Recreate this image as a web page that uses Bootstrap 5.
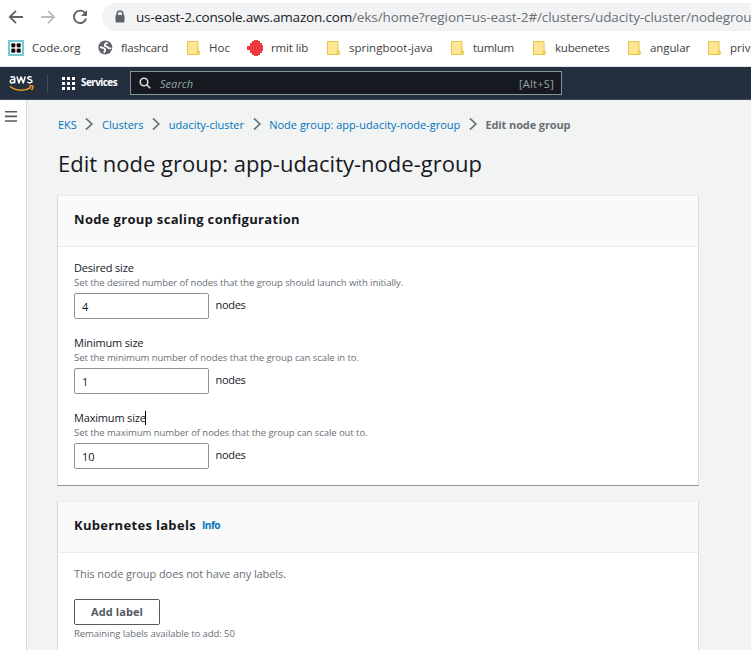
<!DOCTYPE html>
<html lang="en">
<head>
<meta charset="utf-8">
<meta name="viewport" content="width=device-width, initial-scale=1">
<title>Edit node group</title>
<link rel="stylesheet" href="https://cdn.jsdelivr.net/npm/bootstrap@5.3.0/dist/css/bootstrap.min.css">
<style>
html, body { height: 650px; overflow: hidden; }
body { font-family: "Open Sans", "Noto Sans", sans-serif; font-size: 11px; line-height: 15px; color: #16191f; background: #fff; }
svg { display: block; flex: none; }
a { color: #0073bb; text-decoration: none; }

/* browser chrome */
.toolbar { height: 33px; padding-left: 8px; }
.tool-icon { width: 16px; height: 16px; margin-right: 16px; }
.omnibox { height: 28px; margin-left: -2px; margin-right: -20px; padding-left: 12px; border-radius: 14px 0 0 14px; background: #f1f3f4; font-size: 13.5px; line-height: 28px; color: #202124; }
.omnibox svg { margin-right: 10px; }
.omnibox .host { letter-spacing: -.18px; width: 216px; }
.omnibox .path { letter-spacing: -.09px; color: #6b6f73; }
.bookmarks { height: 34px; padding: 0 0 4px 8px; border-bottom: 1px solid #dee1e6; font-size: 11.5px; color: #3c4043; }
.bookmark { flex: none; display: flex; align-items: center; }
.bookmark svg { margin-right: 8px; }
.bookmark:nth-child(1) { width: 90px; }
.bookmark:nth-child(2) { width: 89px; letter-spacing: -.25px; }
.bookmark:nth-child(3) { width: 60px; }
.bookmark:nth-child(4) { width: 80px; letter-spacing: -.13px; }
.bookmark:nth-child(5) { width: 124px; }
.bookmark:nth-child(6) { width: 82px; letter-spacing: -.23px; }
.bookmark:nth-child(7) { width: 95px; letter-spacing: -.19px; }
.bookmark:nth-child(8) { width: 80px; letter-spacing: -.1px; }

/* console header */
.console-bar { height: 33px; background: #232f3e; border-bottom: 1px solid #424d5b; color: #fff; padding-left: 9px; }
.bar-divider { width: 1px; height: 18px; background: #414d5c; margin: 0 14px 0 13px; }
.services { width: 49px; margin-left: 6px; margin-top: -2px; font-size: 10px; font-weight: 700; letter-spacing: -.58px; }
.searchbox { width: 432px; height: 24px; background: #16191f; border: 1px solid #879596; padding: 0 7px 0 8px; color: #95a5a6; }
.searchbox em { font-size: 11px; margin-left: 9px; letter-spacing: .05px; }
.searchbox span { letter-spacing: .26px; }

/* page */
.page { height: 550px; }
.side { width: 27px; border-right: 1px solid #d5dbdb; padding: 11px 0 0 5px; }
.content { background: #f2f3f3; padding: 16px 52px 0 30px; }
.crumbs { height: 16px; padding-left: 1px; }
.crumbs svg { margin: 0 8.6px; }
.crumbs .here { color: #687078; font-weight: 700; letter-spacing: -.113px; }
.page-title { font-size: 22px; line-height: 30px; font-weight: 400; margin: 16px 0 17px 1px; }
.panel { width: 642px; margin-bottom: 15px; background: #fff; border: 1px solid #d5dbdb; border-top-color: #eaeded; border-bottom-color: #879596; }
.panel-head { height: 51px; background: #fafafa; border-bottom: 1px solid #eaeded; padding: 0 16px 5px; }
.panel-head h2 { font-size: 13px; line-height: 18px; font-weight: 700; margin: 0; letter-spacing: .32px; }
.panel-head .info { font-size: 10px; font-weight: 700; margin: 2px 0 0 6px; letter-spacing: -.48px; }
.fields { height: 238px; padding: 13px 16px 0; }
.field { height: 75.2px; }
.field label { display: block; line-height: 15px; letter-spacing: -.18px; }
.hint { font-size: 9.5px; line-height: 15px; color: #687078; letter-spacing: -.065px; white-space: nowrap; }
.num { width: 135px; height: 26px; margin-top: 3px; padding: 1px 7px 0; border: 1px solid #879596; border-radius: 2px; font-size: 11px; line-height: 15px; color: #16191f; }
.unit { margin: 0 0 0 6.5px; letter-spacing: -.3px; }
.caret { display: inline-block; width: 1px; height: 14px; margin-left: -1px; background: #000; vertical-align: -3px; }
.labels-body { padding: 13px 16px 48px; }
.empty-note { margin: 0 0 18px; color: #687078; letter-spacing: -.08px; }
.add-btn { display: block; width: 86px; height: 26px; margin-bottom: 1px; padding: 0; border: 1px solid #545b64; border-radius: 2px; font-size: 11px; line-height: 22px; font-weight: 700; color: #545b64; letter-spacing: .1px; background: #fff; }
</style>
<script src="https://cdn.jsdelivr.net/npm/bootstrap@5.3.0/dist/js/bootstrap.bundle.min.js"></script>
</head>
<body>
<svg width="0" height="0" class="position-absolute">
  <defs>
    <symbol id="folder" viewBox="0 0 14 16"><path d="M.5 1.5H11v9.3h1v3.7H.5z" fill="#ffe694" stroke="#e8c444"/><path d="M10 14.5v-3.2h2v3.2z" fill="#ffe694" stroke="#e8c444"/></symbol>
    <symbol id="chev" viewBox="0 0 8 12"><path d="M1 .4 6.8 6 1 11.6" fill="none" stroke="#687078" stroke-width="1.7"/></symbol>
  </defs>
</svg>

<div class="toolbar d-flex align-items-center overflow-hidden">
  <svg class="tool-icon" viewBox="0 0 16 16" fill="none" stroke="#5f6368" stroke-width="1.8"><path d="M15 8H2M8 1.8 1.8 8 8 14.2"/></svg>
  <svg class="tool-icon" viewBox="0 0 16 16" fill="none" stroke="#babcbe" stroke-width="1.8"><path d="M1 8h13M8 1.8 14.2 8 8 14.2"/></svg>
  <svg class="tool-icon" viewBox="0 0 16 16"><path d="M13.2 4.2A6.2 6.2 0 1 0 14.1 9.6" fill="none" stroke="#5f6368" stroke-width="1.9"/><path d="M15 1v6H9z" fill="#5f6368"/></svg>
  <div class="omnibox d-flex align-items-center flex-grow-1 text-nowrap">
    <svg width="12" height="14" viewBox="0 0 12 14"><path d="M3.2 6V3.8a2.8 2.8 0 0 1 5.6 0V6" fill="none" stroke="#5f6368" stroke-width="1.5"/><rect x="1.5" y="5" width="9" height="7.5" rx="1" fill="#5f6368"/></svg>
    <span class="host">us-east-2.console.aws.amazon.com</span><span class="path">/eks/home?region=us-east-2#/clusters/udacity-cluster/nodegroups</span>
  </div>
</div>

<div class="bookmarks d-flex align-items-center overflow-hidden text-nowrap">
  <div class="bookmark"><svg width="16" height="16"><rect x="1" y="1" width="14" height="14" fill="#fff" stroke="#4fbdc9" stroke-width="1.6"/><g fill="#111"><rect x="3.2" y="3.2" width="4.2" height="4.2" rx="1.3"/><rect x="8.6" y="3.2" width="4.2" height="4.2" rx="1.3"/><rect x="3.2" y="8.6" width="4.2" height="4.2" rx="1.3"/><rect x="8.6" y="8.6" width="4.2" height="4.2" rx="1.3"/></g></svg>Code.org</div>
  <div class="bookmark"><svg width="15" height="15" viewBox="0 0 15 15"><circle cx="7.3" cy="7.5" r="7" fill="#5f6368"/><path d="M9.6 2.6 6.8 4.2l.2 1.9 2.2.6 1.4 1.4 2.6.2M2 7.2l3 .6 2 1.2.2 1.4-1.4 2.4" fill="none" stroke="#fff" stroke-width="1.7"/></svg>flashcard</div>
  <div class="bookmark"><svg width="14" height="16"><use href="#folder"/></svg>Hoc</div>
  <div class="bookmark"><svg width="16" height="16"><path d="M0 6h3V3h2V1h2V0h4v1h2v2h2v2h1v6h-1v2h-2v2h-2v1H7v-1H5v-2H3v-3H0z" fill="#ee3b40"/></svg>rmit lib</div>
  <div class="bookmark"><svg width="14" height="16"><use href="#folder"/></svg>springboot-java</div>
  <div class="bookmark"><svg width="14" height="16"><use href="#folder"/></svg>tumlum</div>
  <div class="bookmark"><svg width="14" height="16"><use href="#folder"/></svg>kubenetes</div>
  <div class="bookmark"><svg width="14" height="16"><use href="#folder"/></svg>angular</div>
  <div class="bookmark"><svg width="14" height="16"><use href="#folder"/></svg>private</div>
</div>

<header class="console-bar d-flex align-items-center">
  <svg width="25" height="19" viewBox="0 0 25 19">
    <g fill="none" stroke="#fff" stroke-width="1.5" stroke-linejoin="round">
      <path d="M1.5 3.4C3 2.3 5.7 2.2 5.7 4.6v4.6M5.7 5.7C3.7 5.2 1.2 5.5 1.2 7.3c0 2.4 3.2 2 4.5.2"/>
      <path d="m8 2.5 1.9 6.4 2.2-6 2.2 6 1.9-6.4"/>
      <path d="M22.7 3.2c-1.6-.9-4-.6-4 .8 0 2 4.3 1 4.3 3.2 0 1.8-2.8 2-4.7 1"/>
    </g>
    <path d="M.8 12.2c6.2 5 15.5 5.2 21.2 1.2M20 12.2c2.5-.7 4.2-.7 4 .4 0 1.2-.6 2.5-1.4 3.5" fill="none" stroke="#f79a20" stroke-width="1.4"/>
  </svg>
  <div class="bar-divider"></div>
  <svg width="13" height="13" viewBox="0 0 13 13" fill="#fff"><path d="M0 0h3v3H0zM5 0h3v3H5zM10 0h3v3h-3zM0 5h3v3H0zM5 5h3v3H5zM10 5h3v3h-3zM0 10h3v3H0zM5 10h3v3H5zM10 10h3v3h-3z"/></svg>
  <span class="services">Services</span>
  <div class="searchbox d-flex align-items-center">
    <svg width="12" height="12" viewBox="0 0 12 12" fill="none" stroke="#d5dbdb" stroke-width="1.6"><circle cx="5" cy="5" r="3.8"/><path d="m7.7 7.7 3.6 3.6"/></svg>
    <em>Search</em>
    <span class="ms-auto">[Alt+S]</span>
  </div>
</header>

<div class="page d-flex">
  <nav class="side flex-shrink-0">
    <svg width="12" height="11" viewBox="0 0 12 11" fill="#545b64"><path d="M0 0h12v1.6H0zM0 4.6h12v1.6H0zM0 9.2h12v1.6H0z"/></svg>
  </nav>
  <main class="content flex-grow-1 overflow-hidden">
    <div class="crumbs d-flex align-items-center text-nowrap">
      <a href="#">EKS</a><svg width="8" height="12"><use href="#chev"/></svg>
      <a href="#">Clusters</a><svg width="8" height="12"><use href="#chev"/></svg>
      <a href="#">udacity-cluster</a><svg width="8" height="12"><use href="#chev"/></svg>
      <a href="#">Node group: app-udacity-node-group</a><svg width="8" height="12"><use href="#chev"/></svg>
      <span class="here">Edit node group</span>
    </div>
    <h1 class="page-title">Edit node group: app-udacity-node-group</h1>

    <section class="panel">
      <div class="panel-head d-flex align-items-center"><h2>Node group scaling configuration</h2></div>
      <div class="fields">
        <div class="field">
          <label for="desired">Desired size</label>
          <div class="hint">Set the desired number of nodes that the group should launch with initially.</div>
          <div class="d-flex align-items-center"><input id="desired" class="num" value="4"><span class="unit">nodes</span></div>
        </div>
        <div class="field">
          <label for="minimum">Minimum size</label>
          <div class="hint">Set the minimum number of nodes that the group can scale in to.</div>
          <div class="d-flex align-items-center"><input id="minimum" class="num" value="1"><span class="unit">nodes</span></div>
        </div>
        <div class="field">
          <label for="maximum">Maximum size<i class="caret"></i></label>
          <div class="hint">Set the maximum number of nodes that the group can scale out to.</div>
          <div class="d-flex align-items-center"><input id="maximum" class="num" value="10"><span class="unit">nodes</span></div>
        </div>
      </div>
    </section>

    <section class="panel">
      <div class="panel-head d-flex align-items-center"><h2>Kubernetes labels</h2><a href="#" class="info">Info</a></div>
      <div class="labels-body">
        <p class="empty-note text-nowrap">This node group does not have any labels.</p>
        <button class="add-btn" type="button">Add label</button>
        <div class="hint">Remaining labels available to add: 50</div>
      </div>
    </section>
  </main>
</div>
</body>
</html>
